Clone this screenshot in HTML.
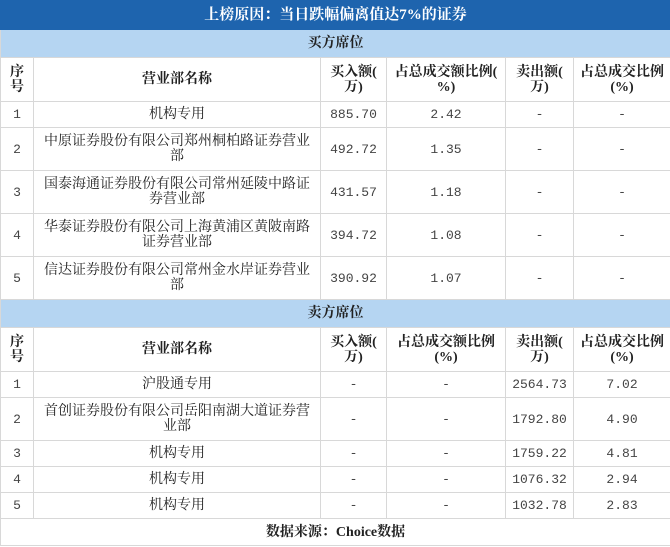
<!DOCTYPE html><html><head><meta charset="utf-8"><style>
body{margin:0;width:670px;height:547px;background:#fff;overflow:hidden}
table{border-collapse:collapse;table-layout:fixed;width:670px;font-family:"Liberation Serif","Noto Serif CJK SC",serif;font-size:14px;color:#222}
td{border:1px solid #d8d8d8;text-align:center;padding:0;line-height:15px}
.t{background:#1e64ae;color:#fff;font-weight:bold;font-size:15px;height:28px;border-color:#1e64ae}
.s{background:#b5d5f2;font-weight:bold;height:27px}
.h td{font-weight:bold;height:43px}
.r1{height:26px}.r2{height:43px}
.n{font-family:"Liberation Mono","Noto Serif CJK SC",monospace;color:#444;font-size:13px}
.f{font-weight:bold;height:26px}
</style></head><body><table>
<colgroup><col style="width:33px"><col style="width:287px"><col style="width:66px"><col style="width:119px"><col style="width:68px"><col style="width:97px"></colgroup>
<tr><td colspan="6" class="t">上榜原因：当日跌幅偏离值达7%的证券</td></tr>
<tr><td colspan="6" class="s">买方席位</td></tr>
<tr class="h"><td>序<br>号</td><td>营业部名称</td><td>买入额(<br>万)</td><td>占总成交额比例(<br>%)</td><td>卖出额(<br>万)</td><td>占总成交比例<br>(%)</td></tr>
<tr class="r1"><td class="n">1</td><td>机构专用</td><td class="n">885.70</td><td class="n">2.42</td><td class="n">-</td><td class="n">-</td></tr>
<tr class="r2"><td class="n">2</td><td>中原证券股份有限公司郑州桐柏路证券营业<br>部</td><td class="n">492.72</td><td class="n">1.35</td><td class="n">-</td><td class="n">-</td></tr>
<tr class="r2"><td class="n">3</td><td>国泰海通证券股份有限公司常州延陵中路证<br>券营业部</td><td class="n">431.57</td><td class="n">1.18</td><td class="n">-</td><td class="n">-</td></tr>
<tr class="r2"><td class="n">4</td><td>华泰证券股份有限公司上海黄浦区黄陂南路<br>证券营业部</td><td class="n">394.72</td><td class="n">1.08</td><td class="n">-</td><td class="n">-</td></tr>
<tr class="r2"><td class="n">5</td><td>信达证券股份有限公司常州金水岸证券营业<br>部</td><td class="n">390.92</td><td class="n">1.07</td><td class="n">-</td><td class="n">-</td></tr>
<tr><td colspan="6" class="s">卖方席位</td></tr>
<tr class="h"><td>序<br>号</td><td>营业部名称</td><td>买入额(<br>万)</td><td>占总成交额比例<br>(%)</td><td>卖出额(<br>万)</td><td>占总成交比例<br>(%)</td></tr>
<tr class="r1"><td class="n">1</td><td>沪股通专用</td><td class="n">-</td><td class="n">-</td><td class="n">2564.73</td><td class="n">7.02</td></tr>
<tr class="r2"><td class="n">2</td><td>首创证券股份有限公司岳阳南湖大道证券营<br>业部</td><td class="n">-</td><td class="n">-</td><td class="n">1792.80</td><td class="n">4.90</td></tr>
<tr class="r1"><td class="n">3</td><td>机构专用</td><td class="n">-</td><td class="n">-</td><td class="n">1759.22</td><td class="n">4.81</td></tr>
<tr class="r1"><td class="n">4</td><td>机构专用</td><td class="n">-</td><td class="n">-</td><td class="n">1076.32</td><td class="n">2.94</td></tr>
<tr class="r1"><td class="n">5</td><td>机构专用</td><td class="n">-</td><td class="n">-</td><td class="n">1032.78</td><td class="n">2.83</td></tr>
<tr><td colspan="6" class="f">数据来源：Choice数据</td></tr>
</table></body></html>
